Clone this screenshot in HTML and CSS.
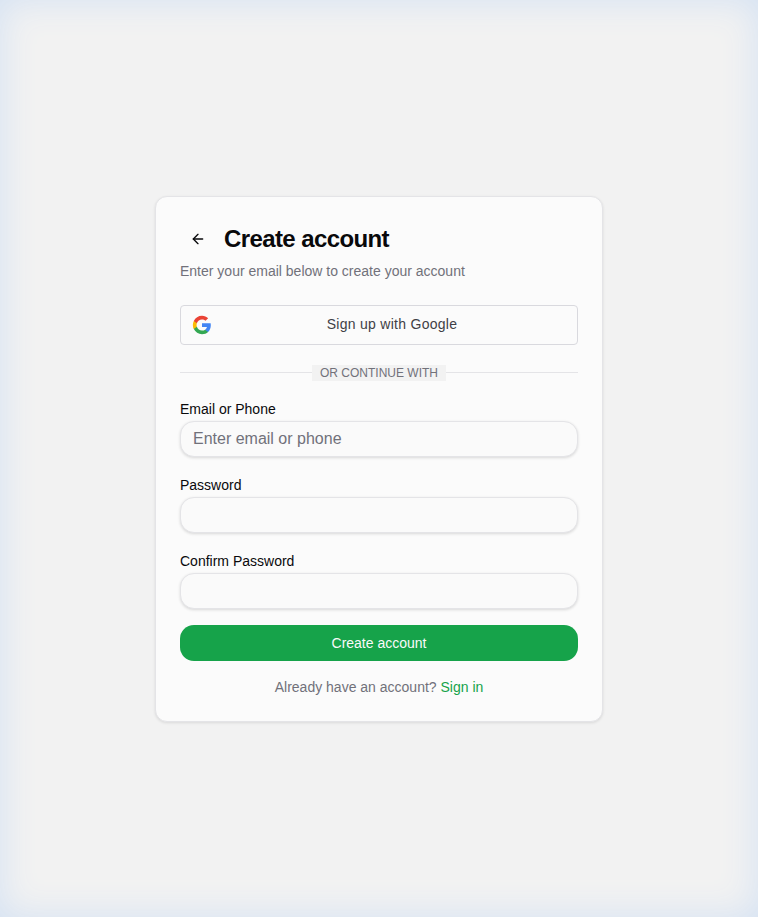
FILE: index.html
```html
<!DOCTYPE html>
<html lang="en">

<head>
    <meta charset="UTF-8">
    <meta name="viewport" content="width=device-width, initial-scale=1.0">
    <title>Create account</title>
    <link rel="stylesheet" href="styles.css">
</head>

<body>
    <div class="wrap">
        <div class="card">
            <div class="cardHead">
                <button class="backBtn" type="button" aria-label="Back">
                    <svg width="16" height="16" viewBox="0 0 24 24" fill="none" stroke="currentColor" stroke-width="2" stroke-linecap="round" stroke-linejoin="round">
                        <path d="m12 19-7-7 7-7"></path>
                        <path d="M19 12H5"></path>
                    </svg>
                </button>
                <h1 class="title">Create account</h1>
            </div>
            <p class="subtitle">Enter your email below to create your account</p>

            <button class="googleBtn" type="button">
                <svg class="googleIcon" width="20" height="20" viewBox="0 0 24 24">
                    <path fill="#4285F4" d="M22.56 12.25c0-.78-.07-1.53-.2-2.25H12v4.26h5.92c-.26 1.37-1.04 2.53-2.21 3.31v2.77h3.57c2.08-1.92 3.28-4.74 3.28-8.09z"></path>
                    <path fill="#34A853" d="M12 23c2.97 0 5.46-.98 7.28-2.66l-3.57-2.77c-.98.66-2.23 1.06-3.71 1.06-2.86 0-5.29-1.93-6.16-4.53H2.18v2.84C3.99 20.53 7.7 23 12 23z"></path>
                    <path fill="#FBBC05" d="M5.84 14.09c-.22-.66-.35-1.36-.35-2.09s.13-1.43.35-2.09V7.07H2.18C1.43 8.55 1 10.22 1 12s.43 3.45 1.18 4.93l3.66-2.84z"></path>
                    <path fill="#EA4335" d="M12 5.38c1.62 0 3.06.56 4.21 1.64l3.15-3.15C17.45 2.09 14.97 1 12 1 7.7 1 3.99 3.47 2.18 7.07l3.66 2.84c.87-2.6 3.3-4.53 6.16-4.53z"></path>
                </svg>
                <span class="googleText">Sign up with Google</span>
            </button>

            <div class="divider">
                <span class="dividerText">OR CONTINUE WITH</span>
            </div>

            <form class="form">
                <div class="field">
                    <label class="label" for="email">Email or Phone</label>
                    <input class="input" id="email" type="text" placeholder="Enter email or phone">
                </div>
                <div class="field">
                    <label class="label" for="password">Password</label>
                    <input class="input" id="password" type="password">
                </div>
                <div class="field">
                    <label class="label" for="confirm">Confirm Password</label>
                    <input class="input" id="confirm" type="password">
                </div>
                <button class="submitBtn" type="button">Create account</button>
            </form>

            <p class="footer">Already have an account? <a class="link" href="#">Sign in</a></p>
        </div>
    </div>
</body>

</html>
```

FILE: styles.css
```css
* {
    margin: 0;
    padding: 0;
    box-sizing: border-box;
}

html,
body,
.wrap {
    width: 100%;
    height: 100%;
}

body {
    font-family: "Liberation Sans", Arial, sans-serif;
    color: #09090b;
    background-color: #f2f2f2;
}

.wrap {
    display: flex;
    align-items: center;
    justify-content: center;
    box-shadow: inset 0 0 36px #d3e1f3;
}

.card {
    width: 448px;
    height: 526px;
    padding: 24px;
    background-color: #fbfbfb;
    border: 1px solid #e4e4e7;
    border-radius: 12px;
    box-shadow: 0 1px 3px rgba(0, 0, 0, 0.1);
}

.cardHead {
    display: flex;
    align-items: center;
    gap: 8px;
    height: 36px;
}

.backBtn {
    display: flex;
    align-items: center;
    justify-content: center;
    width: 36px;
    height: 36px;
    border: 0;
    background: none;
    color: #09090b;
}

.title {
    font-size: 24px;
    line-height: 32px;
    font-weight: 700;
    letter-spacing: -0.6px;
    color: #09090b;
}

.subtitle {
    margin-top: 4px;
    font-size: 14px;
    line-height: 20px;
    color: #71717a;
}

.googleBtn {
    position: relative;
    display: flex;
    align-items: center;
    justify-content: center;
    width: 100%;
    height: 40px;
    margin-top: 24px;
    padding-left: 26px;
    font-family: inherit;
    font-size: 14px;
    letter-spacing: 0.28px;
    color: #3f3f46;
    background-color: #fbfbfb;
    border: 1px solid #d9d9de;
    border-radius: 4px;
}

.googleText {
    margin-top: -2px;
}

.googleIcon {
    position: absolute;
    left: 11px;
    top: 9px;
}

.divider {
    display: flex;
    align-items: center;
    justify-content: center;
    height: 16px;
    margin-top: 20px;
    background: linear-gradient(#e4e4e7, #e4e4e7) center / 100% 1px no-repeat;
}

.dividerText {
    padding: 0 8px;
    font-size: 12px;
    line-height: 16px;
    color: #71717a;
    background-color: #f2f2f2;
}

.form {
    display: flex;
    flex-direction: column;
    gap: 19px;
    margin-top: 19px;
}

.field {
    display: flex;
    flex-direction: column;
    gap: 2px;
}

.label {
    font-size: 14px;
    line-height: 19px;
    color: #09090b;
}

.input {
    width: 100%;
    height: 36px;
    padding: 0 12px;
    font-family: inherit;
    font-size: 16px;
    color: #09090b;
    background-color: #fafafa;
    border: 1px solid #e4e4e7;
    border-radius: 14px;
    box-shadow: 0 1px 3px rgba(0, 0, 0, 0.14);
    outline: none;
}

.input::placeholder {
    color: #71717a;
}

.submitBtn {
    height: 36px;
    margin-top: -3px;
    font-family: inherit;
    font-size: 14px;
    color: #fafafa;
    background-color: #16a34a;
    border: 0;
    border-radius: 14px;
}

.footer {
    margin-top: 16px;
    font-size: 14px;
    line-height: 20px;
    text-align: center;
    color: #71717a;
}

.link {
    color: #16a34a;
    text-decoration: none;
}
```
